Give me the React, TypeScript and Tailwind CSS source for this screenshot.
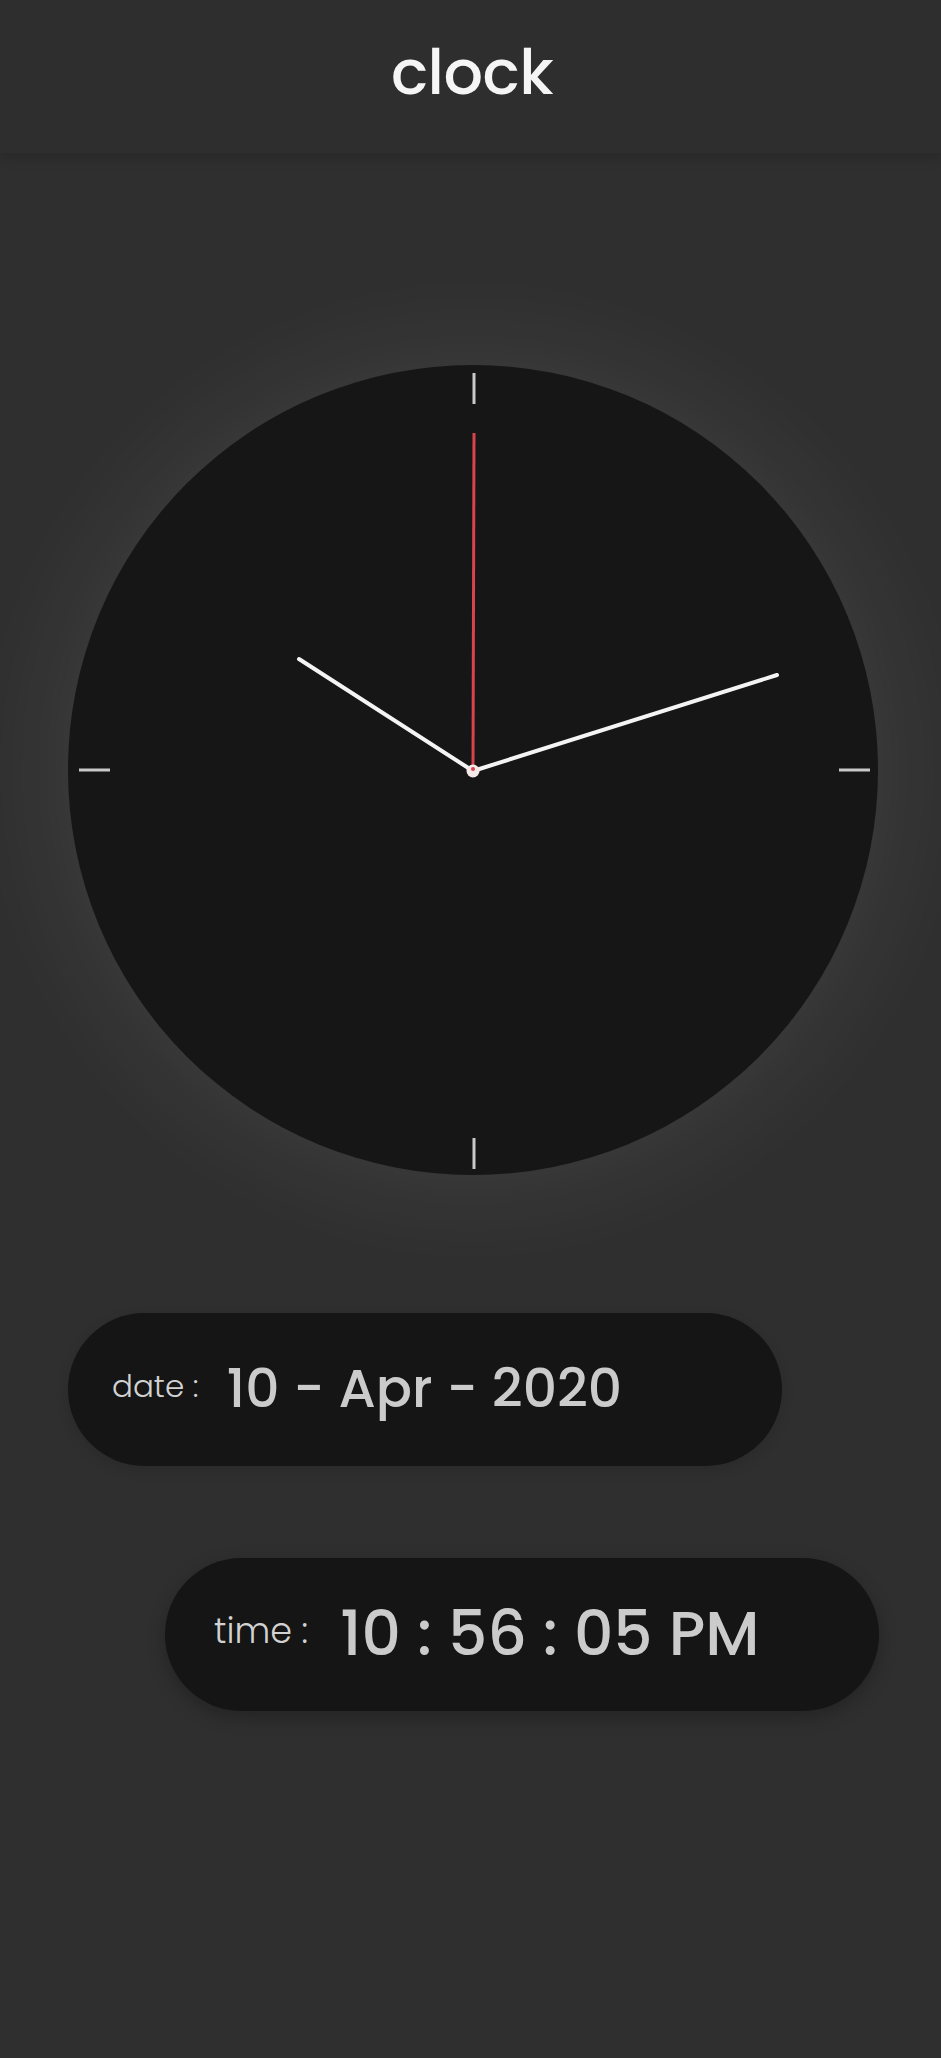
import React from "react";

const font = "font-['Poppins','Inter','Noto_Sans',sans-serif]";

function ClockFace() {
  // static hands, positions taken from the design
  return (
    <svg width="810" height="810" viewBox="0 0 810 810" className="absolute inset-0">
      <g stroke="#c9c9c9" strokeWidth="3">
        <line x1="406" y1="8" x2="406" y2="39" />
        <line x1="406" y1="773" x2="406" y2="804" />
        <line x1="11" y1="405" x2="42" y2="405" />
        <line x1="771" y1="405" x2="802" y2="405" />
      </g>
      <g stroke="#f4f4f4" strokeWidth="4" strokeLinecap="round">
        <line x1="405" y1="406" x2="231" y2="294" />
        <line x1="405" y1="406" x2="709" y2="310" />
      </g>
      <line x1="405" y1="406" x2="406" y2="68" stroke="#d9434b" strokeWidth="3" />
      <circle cx="405" cy="406" r="6.5" fill="#f6e9ea" />
      <circle cx="405" cy="404" r="2" fill="#d9434b" />
    </svg>
  );
}

export default function App() {
  return (
    <div className={`min-h-screen bg-[#2f2f2f] ${font}`}>
      <header className="h-[153px] bg-[#2e2e2e] flex items-center justify-center shadow-[0_4px_12px_rgba(0,0,0,0.18)] relative z-10">
        <h1 className="text-[62px] font-medium text-[#f5f5f5] tracking-[-0.5px] -mt-[8px] ml-[3px]">clock</h1>
      </header>

      <main className="pl-[68px] pt-[212px] flex flex-col">
        <div className="relative w-[810px] h-[810px] rounded-full bg-[#161616] shadow-[0_0_130px_rgba(255,255,255,0.09)]">
          <ClockFace />
        </div>

        <div className="mt-[138px] w-[714px] h-[153px] rounded-full bg-[#151515] flex items-center pl-[44px] shadow-[0_4px_14px_rgba(0,0,0,0.12)]">
          <span className="text-[31px] font-light text-[#d2d2d2] mt-[-6px]">date :</span>
          <span className="ml-[28px] text-[53.5px] font-medium text-[#cbcbcb]">10 - Apr - 2020</span>
        </div>

        <div className="mt-[92px] ml-[97px] w-[714px] h-[153px] rounded-full bg-[#151515] flex items-center pl-[49px] shadow-[0_6px_18px_rgba(0,0,0,0.25)]">
          <span className="text-[35px] font-light text-[#d2d2d2] mt-[-6px]">time :</span>
          <span className="ml-[32px] text-[61.5px] font-medium text-[#cbcbcb]">10 : 56 : 05 PM</span>
        </div>
      </main>
    </div>
  );
}
